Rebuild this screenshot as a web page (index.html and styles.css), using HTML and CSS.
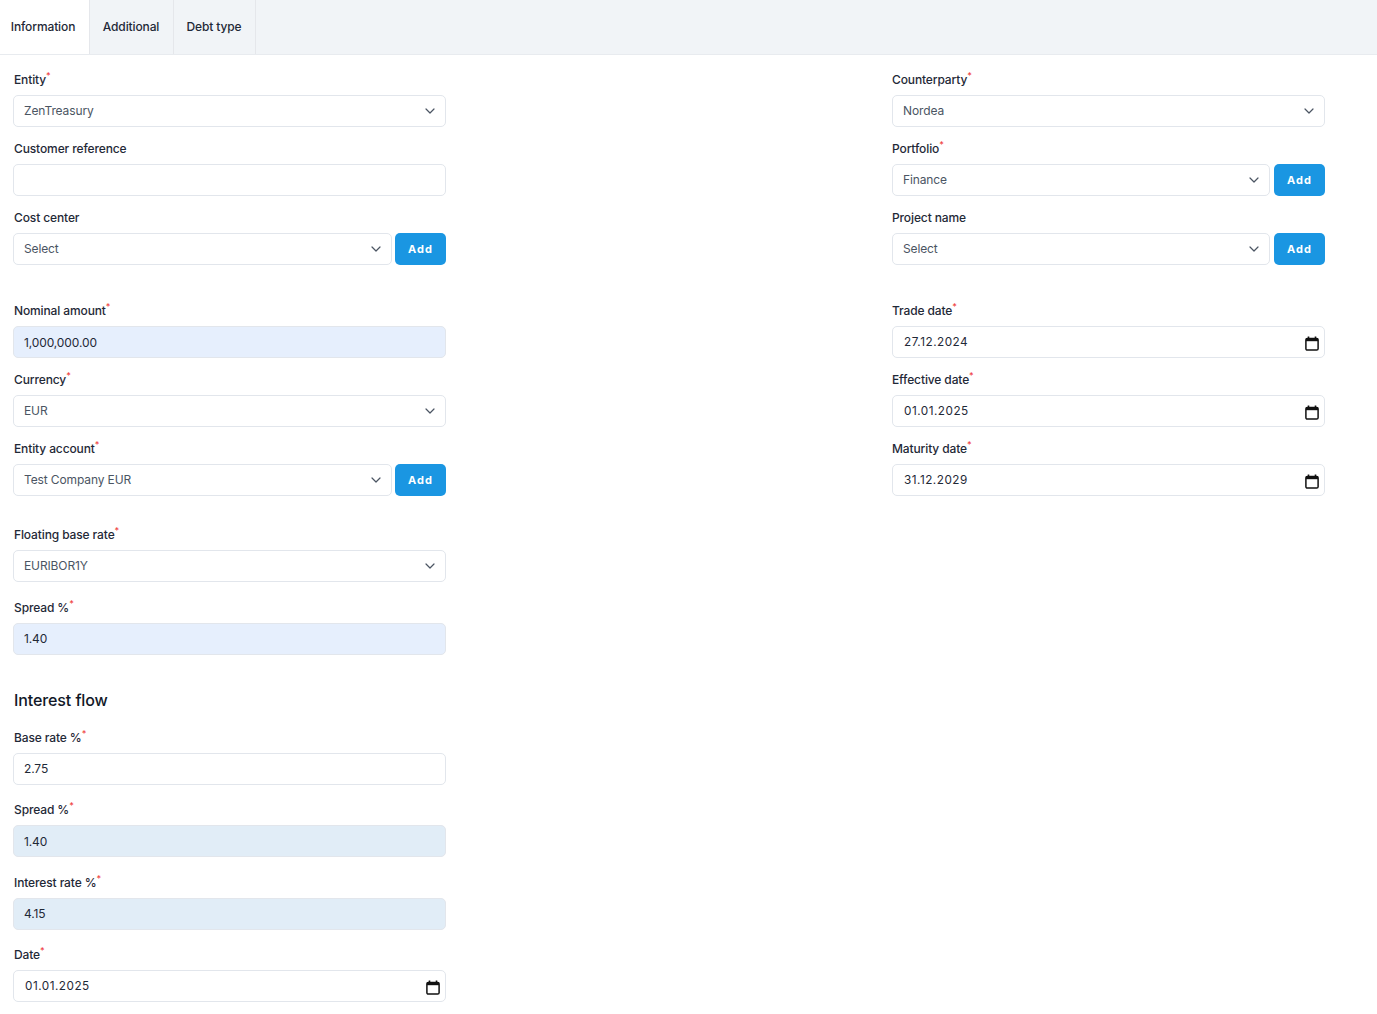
FILE: index.html
```html
<!DOCTYPE html>
<html lang="en">
<head>
<meta charset="utf-8">
<title>Debt form</title>
<link rel="stylesheet" href="styles.css">
</head>
<body>
<svg class="defs" width="0" height="0" aria-hidden="true">
  <symbol id="chev" viewBox="0 0 10 6"><path d="M1 1l4 4 4-4" fill="none" stroke="#4b5563" stroke-width="1.2" stroke-linecap="round" stroke-linejoin="round"/></symbol>
  <symbol id="cal" viewBox="0 0 14 15"><path d="M3.5 .6v2M10.5 .6v2" stroke="#111" stroke-width="1.6" fill="none"/><rect x=".9" y="2.4" width="12.2" height="11.7" rx="1.4" fill="none" stroke="#111" stroke-width="1.5"/><rect x="1" y="2.4" width="12" height="2.8" fill="#111"/></symbol>
</svg>
<nav class="tabs">
  <div class="tab active">Information</div>
  <div class="tab t2">Additional</div>
  <div class="tab t3">Debt type</div>
</nav>
<main class="form">
  <section class="col">
    <div class="field"><label>Entity<sup>*</sup></label><div class="box sel">ZenTreasury<svg class="chev"><use href="#chev"/></svg></div></div>
    <div class="field"><label>Customer reference</label><div class="box"></div></div>
    <div class="field"><label>Cost center</label><div class="row"><div class="box sel">Select<svg class="chev"><use href="#chev"/></svg></div><button class="add">Add</button></div></div>
    <div class="spacer"></div>
    <div class="field"><label>Nominal amount<sup>*</sup></label><div class="box val blue">1,000,000.00</div></div>
    <div class="field"><label>Currency<sup>*</sup></label><div class="box sel">EUR<svg class="chev"><use href="#chev"/></svg></div></div>
    <div class="field"><label>Entity account<sup>*</sup></label><div class="row"><div class="box sel">Test Company EUR<svg class="chev"><use href="#chev"/></svg></div><button class="add">Add</button></div></div>
    <div class="spacer s2"></div>
    <div class="field wide"><label>Floating base rate<sup>*</sup></label><div class="box sel">EURIBOR1Y<svg class="chev"><use href="#chev"/></svg></div></div>
    <div class="field wide"><label>Spread %<sup>*</sup></label><div class="box val blue">1.40</div></div>
    <h2>Interest flow</h2>
    <div class="field wide"><label>Base rate %<sup>*</sup></label><div class="box val">2.75</div></div>
    <div class="field wide"><label>Spread %<sup>*</sup></label><div class="box val dis">1.40</div></div>
    <div class="field wide"><label>Interest rate %<sup>*</sup></label><div class="box val dis">4.15</div></div>
    <div class="field wide"><label>Date<sup>*</sup></label><div class="box date">01.01.2025<svg class="cal"><use href="#cal"/></svg></div></div>
  </section>
  <section class="col right">
    <div class="field"><label>Counterparty<sup>*</sup></label><div class="box sel">Nordea<svg class="chev"><use href="#chev"/></svg></div></div>
    <div class="field"><label>Portfolio<sup>*</sup></label><div class="row"><div class="box sel">Finance<svg class="chev"><use href="#chev"/></svg></div><button class="add">Add</button></div></div>
    <div class="field"><label>Project name</label><div class="row"><div class="box sel">Select<svg class="chev"><use href="#chev"/></svg></div><button class="add">Add</button></div></div>
    <div class="spacer"></div>
    <div class="field"><label>Trade date<sup>*</sup></label><div class="box date">27.12.2024<svg class="cal"><use href="#cal"/></svg></div></div>
    <div class="field"><label>Effective date<sup>*</sup></label><div class="box date">01.01.2025<svg class="cal"><use href="#cal"/></svg></div></div>
    <div class="field"><label>Maturity date<sup>*</sup></label><div class="box date">31.12.2029<svg class="cal"><use href="#cal"/></svg></div></div>
  </section>
</main>
</body>
</html>
```
FILE: styles.css
```css
* { box-sizing: border-box; }
html, body { margin: 0; padding: 0; background: #fff; height: 1014px; overflow: hidden; }
body { font-family: Inter, "Liberation Sans", sans-serif; font-size: 12px; letter-spacing: -.12px; color: #1f2937; }
.defs { position: absolute; }
.tabs { display: flex; height: 55px; background: #f1f4f7; border-bottom: 1px solid #e8ebef; }
.tab { display: flex; align-items: center; height: 54px; font-weight: 500; color: #1f2937; border-right: 1px solid #e5e7eb; padding: 0 1px 1px 0; justify-content: center; }
.tab.active { width: 90px; background: #fff; padding-right: 3px; }
.t2 { width: 84px; }
.t3 { width: 82px; }
.form { display: flex; justify-content: space-between; padding: 14px 52px 0 13px; }
.col { width: 433px; display: flex; flex-direction: column; flex: none; }
.field { display: flex; flex-direction: column; flex: none; margin-bottom: 11px; }
.wide { margin-bottom: 14.5px; }
label { display: block; font-weight: 500; line-height: 16px; height: 16px; margin: 3px 0 7px 1px; color: #1f2937; }
.right label { margin-left: 0; }
sup { color: #ef4444; font-size: 9px; line-height: 0; position: relative; top: 0; vertical-align: super; }
.box { height: 32px; flex: none; border: 1px solid #e2e6ec; border-radius: 5px; background: #fff; display: flex; align-items: center; padding-left: 10px; position: relative; min-width: 0; }
.row .box { flex: 1; }
.right .row { gap: 4px; }
.sel { color: #4b5563; padding-bottom: 1px; }
.val { color: #1f2937; }
.blue { background: #e6effd; }
.dis { background: #e1edf7; }
.date { padding-left: 11px; font-size: 11.75px; letter-spacing: .5px; color: #1f2937; }
.row { display: flex; gap: 3px; }
.add { width: 51px; height: 32px; flex: none; border: 0; border-radius: 5px; background: #1a96e2; color: #fff; font: 700 11px Inter, "Liberation Sans", sans-serif; letter-spacing: 1px; padding: 0 0 1px; }
.chev { position: absolute; right: 10.5px; top: 12px; width: 10px; height: 6px; }
.cal { position: absolute; right: 5px; top: 9px; width: 14px; height: 15px; }
.spacer { height: 24px; flex: none; }
.s2 { height: 17px; }
h2 { font-size: 16px; font-weight: 500; letter-spacing: -.1px; margin: 18.5px 0 15px 1px; line-height: 24px; color: #111827; }
```
